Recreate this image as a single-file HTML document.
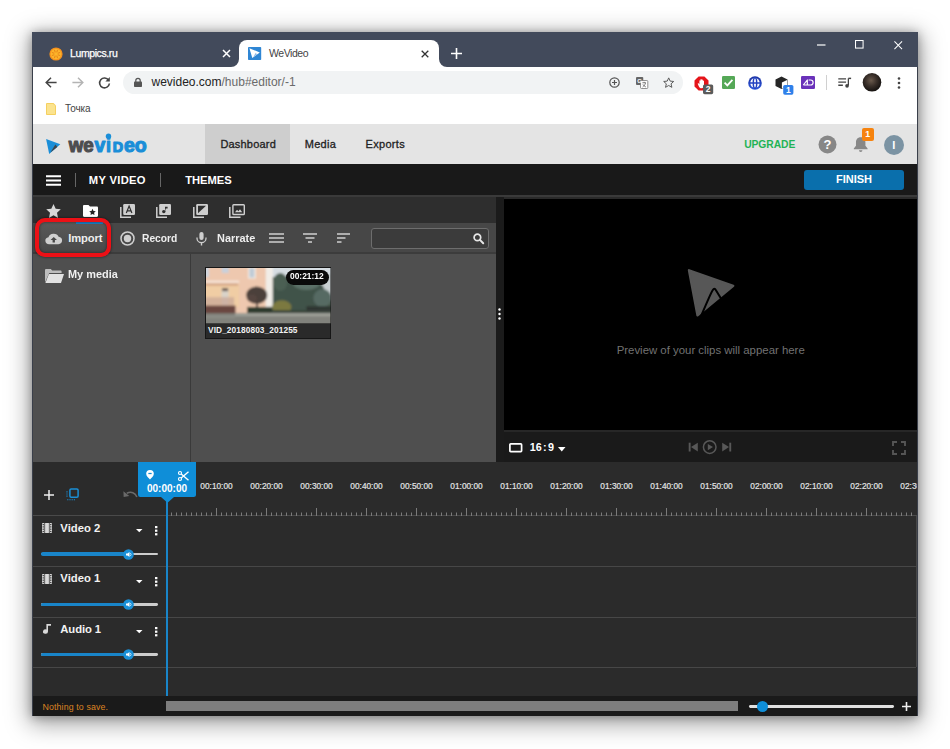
<!DOCTYPE html>
<html lang="en">
<head>
<meta charset="utf-8">
<title>WeVideo</title>
<style>
*{box-sizing:border-box;margin:0;padding:0}
html,body{width:950px;height:749px;overflow:hidden;background:#fff}
body{position:relative;font-family:"Liberation Sans",sans-serif;}
.a,#o>*{position:absolute}
.t{position:absolute;white-space:nowrap;line-height:1}
svg{position:absolute;overflow:visible}
#win{position:absolute;left:32px;top:32px;width:886px;height:684.400px;background:#3a3f4a;box-shadow:0 5px 22px 3px rgba(0,0,0,.37),0 1px 9px rgba(0,0,0,.3)}
#o{position:absolute;left:-32px;top:-32px;width:950px;height:749px}
/* children of #o use page coordinates */
#titlebar{left:32px;top:32px;width:886px;height:35px;background:#424a5b}
#tab2{left:238.500px;top:39.500px;width:200px;height:27.500px;background:#fff;border-radius:8px 8px 0 0}
#chrome{left:33px;top:67px;width:883.500px;height:57px;background:#fff}
#omni{left:123px;top:71px;width:560px;height:23px;border-radius:12px;background:#f1f3f4}
#hdr{left:33px;top:124px;width:883.500px;height:40px;background:#e4e4e4}
#dash{left:205px;top:124px;width:85px;height:40px;background:#cecece}
#blackbar{left:33px;top:164px;width:883.500px;height:30.500px;background:#191919}
#finish{left:804px;top:170.400px;width:100px;height:20px;background:#0a6fac;border-radius:3px}
#editor{left:33px;top:194.500px;width:883.500px;height:267.500px;background:#1b1b1b;border-top:2px solid #3a3a3a}
#iconrow{left:33px;top:196.500px;width:463px;height:26.500px;background:#2e2e2e}
#toolrow{left:33px;top:223px;width:463px;height:31px;background:#474747}
#tree{left:33px;top:254px;width:157px;height:208px;background:#4f4f4f}
#grid{left:191px;top:254px;width:305px;height:208px;background:#4f4f4f}
#preview{left:504px;top:198.500px;width:412.500px;height:231.500px;background:#000}
#pctl{left:504px;top:430px;width:412.500px;height:32px;background:#1a1a1a}
#timeline{left:33px;top:462px;width:883.500px;height:234px;background:#2b2b2b}
#status{left:33px;top:696px;width:883.500px;height:20.400px;background:#1a1a1a}
</style>
</head>
<body>
<div id="win"><div id="o">
  <div id="titlebar"></div>
  <div id="tab2"></div>
  <div id="chrome"></div>
  <div id="omni"></div>
  <!--CHROME-->
  <!-- tab 1 -->
  <svg style="left:49px;top:46.700px" width="14" height="14" viewBox="0 0 14 14"><circle cx="7" cy="7" r="6.600" fill="#f6911d"/><circle cx="7" cy="7" r="5.300" fill="#fcb42a"/><path d="M9.03 7.84L10.70 8.53M7.84 9.03L8.53 10.70M6.16 9.03L5.47 10.70M4.97 7.84L3.30 8.53M4.97 6.16L3.30 5.47M6.16 4.97L5.47 3.30M7.84 4.97L8.53 3.30M9.03 6.16L10.70 5.47" stroke="#e98a1c" stroke-width="1.100" stroke-linecap="round" fill="none"/></svg>
  <div class="t" id="tt1" style="-webkit-text-stroke:.25px #fff;left:70px;top:47.800px;font-size:10.500px;letter-spacing:-.4px;color:#fff">Lumpics.ru</div>
  <svg style="left:222px;top:49px" width="9" height="9" viewBox="0 0 9 9"><path d="M1 1l7 7M8 1l-7 7" stroke="#fff" stroke-width="1.5" fill="none"/></svg>
  <!-- tab 2 -->
  <svg style="left:230.500px;top:59px" width="8" height="8" viewBox="0 0 8 8"><path d="M8 0v8H0A8 8 0 0 0 8 0z" fill="#fff"/></svg>
  <svg style="left:438.500px;top:59px" width="8" height="8" viewBox="0 0 8 8"><path d="M0 0v8h8A8 8 0 0 1 0 0z" fill="#fff"/></svg>
  <svg style="left:248.400px;top:47.100px" width="13.200" height="13" viewBox="0 0 13.200 13"><rect width="13.200" height="13" rx=".8" fill="#2f86d4"/><path d="M1.400 1.200l10.400 4.300-7.500 5.500z" fill="#fff"/><path d="M5.300 10.100l2.500-4.400 1.200 1.700z" fill="#8fb9e6"/></svg>
  <div class="t" id="tt2" style="left:269px;top:47.800px;font-size:10.500px;letter-spacing:-.45px;color:#444">WeVideo</div>
  <svg style="left:421px;top:50px" width="8" height="8" viewBox="0 0 8 8"><path d="M.7.7l6.6 6.6M7.3.7L.7 7.3" stroke="#333" stroke-width="1.3" fill="none"/></svg>
  <svg style="left:451px;top:48px" width="11" height="11" viewBox="0 0 11 11"><path d="M5.5 0v11M0 5.5h11" stroke="#fff" stroke-width="1.6" fill="none"/></svg>
  <!-- window controls -->
  <svg style="left:817.400px;top:44px" width="8.500" height="2" viewBox="0 0 10 2" preserveAspectRatio="none"><path d="M0 1h10" stroke="#fff" stroke-width="1.2"/></svg>
  <svg style="left:855.200px;top:40.400px" width="8.600" height="8.600" viewBox="0 0 10 10"><rect x=".6" y=".6" width="8.8" height="8.8" fill="none" stroke="#fff" stroke-width="1.2"/></svg>
  <svg style="left:893.600px;top:40.600px" width="8.500" height="8.500" viewBox="0 0 10 10"><path d="M.5.5l9 9M9.500.5l-9 9" stroke="#fff" stroke-width="1.2" fill="none"/></svg>
  <!-- nav buttons -->
  <svg style="left:45px;top:77px" width="12" height="11" viewBox="0 0 12 11"><path d="M11.6 5.5H1.4M6 .8L1.2 5.500 6 10.200" stroke="#444" stroke-width="1.5" fill="none"/></svg>
  <svg style="left:72px;top:77px" width="12" height="11" viewBox="0 0 12 11"><path d="M.4 5.500h10.200M6 .8l4.800 4.700L6 10.200" stroke="#b4b4b4" stroke-width="1.5" fill="none"/></svg>
  <svg style="left:98px;top:76px" width="13" height="13" viewBox="0 0 13 13"><path d="M10.600 4.200A4.900 4.900 0 1 0 11.400 7.500" stroke="#444" stroke-width="1.600" fill="none"/><path d="M11.800 1v4.400H7.400z" fill="#444"/></svg>
  <!-- omnibox -->
  <svg style="left:134px;top:78px" width="8" height="9" viewBox="0 0 8 9"><rect x="0" y="3.500" width="8" height="5.500" rx=".8" fill="#555"/><path d="M1.800 4V2.500a2.200 2.200 0 0 1 4.400 0V4" stroke="#555" stroke-width="1.200" fill="none"/></svg>
  <div class="t" id="url" style="left:151.500px;top:75.700px;font-size:12px;color:#222">wevideo.com<span style="color:#6a6a6a">/hub#editor/-1</span></div>
  <svg style="left:609px;top:77px" width="11" height="11" viewBox="0 0 11 11"><circle cx="5.500" cy="5.500" r="4.700" fill="none" stroke="#555" stroke-width="1.200"/><path d="M5.500 3v5M3 5.500h5" stroke="#555" stroke-width="1.200"/></svg>
  <svg style="left:635.600px;top:76.500px" width="11.800" height="11.500" viewBox="0 0 13 13" preserveAspectRatio="none"><rect x="0" y="0" width="8" height="9" rx="1" fill="#666"/><rect x="5" y="4" width="8" height="9" rx="1" fill="#fff" stroke="#777" stroke-width=".9"/><text x="1.500" y="7" font-size="6.500" font-weight="bold" fill="#fff" font-family="Liberation Sans,sans-serif">G</text><path d="M7 6.500h4M9 5.500v1M7.300 11.300c1.800-1.200 2.800-2.800 3.200-4.600M7.600 8.300c.8 1.400 1.800 2.400 3.300 3" stroke="#555" stroke-width=".8" fill="none"/></svg>
  <svg style="left:662.600px;top:76.800px" width="11.400" height="11.400" viewBox="0 0 13 13"><path d="M6.500 1l1.700 3.700 4 .4-3 2.700.9 4-3.600-2.100-3.600 2.100.9-4-3-2.700 4-.4z" fill="none" stroke="#555" stroke-width="1.100" stroke-linejoin="round"/></svg>
  <!-- extensions -->
  <svg style="left:694px;top:75.500px" width="20" height="19" viewBox="0 0 20 19"><path d="M4.600.5h5.800l4.100 4.100v5.800l-4.100 4.100H4.600L.5 10.400V4.600z" fill="#e5141a"/><path d="M5.400 8.500V4.800c0-.9 1.100-.9 1.100 0V3.600c0-.9 1.200-.9 1.200 0v.6c0-.9 1.200-.9 1.200 0v1c0-.8 1.100-.8 1.100 0v4.300c0 1.800-.9 2.700-2.500 2.700-1.400 0-2-.6-2.600-1.800L3.800 8c-.3-.8.600-1.200 1-.5z" fill="#fff"/><rect x="9" y="8.500" width="10.200" height="9.700" rx="1.600" fill="#5b5b5b"/><text x="14.100" y="16.400" font-size="8.500" font-weight="bold" fill="#fff" text-anchor="middle" font-family="Liberation Sans,sans-serif">2</text></svg>
  <svg style="left:721.700px;top:76px" width="13" height="13" viewBox="0 0 13 13"><rect width="13" height="13" rx="1.300" fill="#55a857"/><path d="M2.600 6.700l2.700 2.700 5.100-5.600" stroke="#fff" stroke-width="1.800" fill="none"/></svg>
  <svg style="left:748px;top:75.500px" width="14" height="14" viewBox="0 0 14 14"><defs><linearGradient id="gl" x1="0" y1="0" x2="0" y2="1"><stop offset="0" stop-color="#1a2f9e"/><stop offset="1" stop-color="#2f5be0"/></linearGradient></defs><circle cx="7" cy="7" r="6.800" fill="url(#gl)"/><ellipse cx="7" cy="7" rx="4.700" ry="5" fill="#fff"/><ellipse cx="7" cy="7" rx="1.700" ry="5.200" fill="none" stroke="#2342c0" stroke-width="1.500"/><path d="M1.500 7h11" stroke="#2342c0" stroke-width="1.500"/></svg>
  <svg style="left:775px;top:75.500px" width="19" height="19" viewBox="0 0 19 19"><path d="M6.500.5l6 2.900v6.700l-6 2.900-6-2.900V3.400z" fill="#262626"/><path d="M6.900 6.600l5.200-2.600v5.900l-5.200 2.500z" fill="#fff"/><rect x="8.200" y="9" width="10.200" height="9.700" rx="1.600" fill="#2f80ea"/><text x="13.300" y="16.900" font-size="8.500" font-weight="bold" fill="#fff" text-anchor="middle" font-family="Liberation Sans,sans-serif">1</text></svg>
  <svg style="left:801.300px;top:76px" width="14" height="13" viewBox="0 0 14 13"><rect width="14" height="13" rx="1.300" fill="#6a32ba"/><path d="M2.300 9l4-5v5H2.300M7.600 4h2a2.500 2.500 0 0 1 0 5H6.800" stroke="#fff" stroke-width="1.200" fill="none" stroke-linejoin="round"/></svg>
  <div style="left:826px;top:75px;width:1px;height:15px;background:#d0d0d0"></div>
  <svg style="left:838.400px;top:77px" width="13.400" height="11" viewBox="0 0 14 12"><path d="M0 2h8.500M0 5.500h8.500M0 9h5" stroke="#444" stroke-width="1.400"/><path d="M11 1.500v7.500" stroke="#444" stroke-width="1.400"/><path d="M11 1.500h3" stroke="#444" stroke-width="1.600"/><circle cx="9.600" cy="9.600" r="2" fill="#444"/></svg>
  <svg style="left:862px;top:72px" width="20" height="20" viewBox="0 0 20 20"><defs><radialGradient id="av" cx=".45" cy=".4" r=".6"><stop offset="0" stop-color="#6a5a4c"/><stop offset=".5" stop-color="#3a302a"/><stop offset="1" stop-color="#14110f"/></radialGradient></defs><circle cx="10" cy="10.300" r="9.300" fill="url(#av)"/></svg>
  <svg style="left:897px;top:77px" width="4" height="12" viewBox="0 0 4 12"><circle cx="2" cy="1.500" r="1.300" fill="#444"/><circle cx="2" cy="6" r="1.300" fill="#444"/><circle cx="2" cy="10.500" r="1.300" fill="#444"/></svg>
  <!-- bookmarks -->
  <svg style="left:46px;top:103px" width="10" height="12" viewBox="0 0 10 12"><path d="M0 .8C0 .4.400 0 .8 0h6.700L10 2.500v8.700c0 .4-.4.800-.8.800H.8c-.4 0-.8-.4-.8-.8z" fill="#f5d060"/><path d="M1 1h6.200l1.800 1.800v8.200H1z" fill="#fbe38e"/></svg>
  <div class="t" id="bm" style="left:65px;top:104.300px;font-size:10px;letter-spacing:-.1px;color:#444">Точка</div>
  <!--/CHROME-->
  <div id="hdr"></div>
  <div id="dash"></div>
  <!--HDR-->
  <svg style="left:44px;top:130px" width="106" height="28" viewBox="44 130 106 28" font-family="Liberation Sans,sans-serif" font-weight="bold">
    <path d="M46.100 139l14.200 5.200L49.200 154z" fill="#1a8ed8"/>
    <path d="M50.400 152.400l5-8 1.900 2.600z" fill="#3e4449"/>
    <text y="152" font-size="20.500" stroke-width="1.200" stroke-linejoin="round"><tspan x="68.800" fill="#4d4d4f" stroke="#4d4d4f" textLength="25" lengthAdjust="spacingAndGlyphs">we</tspan><tspan x="94.600" fill="#1a8ed8" stroke="#1a8ed8" textLength="10.800" lengthAdjust="spacingAndGlyphs">v</tspan><tspan x="106" fill="#1a8ed8" stroke="#1a8ed8" textLength="5" lengthAdjust="spacingAndGlyphs">i</tspan><tspan x="112.800" font-size="15.200" fill="#1a8ed8" stroke="#1a8ed8" textLength="10.400" lengthAdjust="spacingAndGlyphs">D</tspan><tspan x="124" fill="#1a8ed8" stroke="#1a8ed8" textLength="22.800" lengthAdjust="spacingAndGlyphs">eo</tspan></text>
    <circle cx="108.500" cy="136.200" r="2.700" fill="#1a8ed8"/>
  </svg>
  <div class="t" id="n1" style="left:220.400px;top:139.100px;font-size:11px;letter-spacing:.2px;color:#222;-webkit-text-stroke:.3px #222">Dashboard</div>
  <div class="t" id="n2" style="left:304.700px;top:139.100px;font-size:11px;letter-spacing:.3px;color:#222;-webkit-text-stroke:.3px #222">Media</div>
  <div class="t" id="n3" style="left:365.600px;top:139.100px;font-size:11px;letter-spacing:.3px;color:#222;-webkit-text-stroke:.3px #222">Exports</div>
  <div class="t" id="upg" style="left:744.200px;top:139.900px;font-size:10.300px;font-weight:bold;letter-spacing:-.07px;color:#1fb355">UPGRADE</div>
  <svg style="left:818px;top:134.500px" width="19" height="19" viewBox="0 0 19 19"><circle cx="9.500" cy="9.500" r="9" fill="#878787"/><text x="9.500" y="14" font-size="13" font-weight="bold" fill="#fff" text-anchor="middle" font-family="Liberation Sans,sans-serif">?</text></svg>
  <svg style="left:853.200px;top:136.300px" width="15.400" height="16" viewBox="0 0 15 16" preserveAspectRatio="none"><path d="M7.500 1.200c-3 0-4.600 2.200-4.600 5v3.600L.8 12.400v.8h13.400v-.8l-2.100-2.600V6.200c0-2.800-1.600-5-4.600-5z" fill="#878787"/><path d="M5.800 14.200a1.700 1.700 0 0 0 3.400 0z" fill="#878787"/></svg>
  <div style="left:861.500px;top:128.400px;width:12.400px;height:12.400px;border-radius:2px;background:#f6830f"></div>
  <div class="t" id="bdg" style="left:861.500px;top:130.400px;width:12.400px;text-align:center;font-size:8.800px;font-weight:bold;color:#fff">1</div>
  <div style="left:883.700px;top:134.800px;width:20px;height:20px;border-radius:50%;background:#7b93a3"></div>
  <div class="t" id="avi" style="left:883.700px;top:139.500px;width:20px;text-align:center;font-size:11px;color:#fff;font-weight:bold">I</div>
  <!--/HDR-->
  <div id="blackbar"></div>
  <div id="finish"></div>
  <!--BAR-->
  <svg style="left:46px;top:175px" width="15" height="11" viewBox="0 0 15 11"><path d="M0 1.200h15M0 5.500h15M0 9.800h15" stroke="#fff" stroke-width="2"/></svg>
  <div style="left:74.500px;top:173px;width:1px;height:14px;background:#666"></div>
  <div class="t" id="b1" style="left:88.800px;top:174.500px;font-size:11.200px;font-weight:bold;letter-spacing:.32px;color:#fff">MY VIDEO</div>
  <div style="left:160px;top:173px;width:1px;height:14px;background:#666"></div>
  <div class="t" id="b2" style="left:185.300px;top:174.500px;font-size:11.200px;font-weight:bold;letter-spacing:-.06px;color:#fff">THEMES</div>
  <div class="t" id="fin" style="left:804px;top:173.500px;width:100px;text-align:center;font-size:11px;font-weight:bold;color:#fff">FINISH</div>
  <!--/BAR-->
  <div id="editor"></div>
  <div id="iconrow"></div>
  <div id="toolrow"></div>
  <div id="tree"></div>
  <div id="grid"></div>
  <!--MEDIA-->
  <div style="left:33px;top:252px;width:463px;height:2px;background:#3c3c3c"></div>
  <div style="left:190px;top:254px;width:1px;height:208px;background:#3a3a3a"></div>
  <!-- icon row -->
  <svg style="left:46px;top:204px" width="15" height="14" viewBox="0 0 15 14"><path d="M7.500 0l2.200 4.700 5.100.6-3.800 3.500 1 5.100-4.500-2.600L3 13.900l1-5.100L.2 5.300l5.100-.6z" fill="#d8d8d8"/></svg>
  <svg style="left:83px;top:205px" width="15" height="12" viewBox="0 0 15 12"><path d="M0 1.200C0 .5.500 0 1.200 0h4.300l1.500 1.600h6.800c.7 0 1.200.5 1.200 1.200v8c0 .7-.5 1.200-1.200 1.200H1.200C.5 12 0 11.500 0 10.800z" fill="#fff"/><path d="M9.500 3.800l1 2.100 2.300.3-1.700 1.600.4 2.300-2-1.100-2 1.100.4-2.300-1.700-1.600 2.300-.3z" fill="#222"/></svg>
  <svg style="left:120px;top:204px" width="15" height="14" viewBox="0 0 15 14"><path d="M.8 3v10.200H11" fill="none" stroke="#cfcfcf" stroke-width="1.500"/><rect x="3.200" y="0" width="11.800" height="11" rx="1.200" fill="#cfcfcf"/><path d="M6.300 9l2.800-7 2.800 7M7.300 6.800h3.600" stroke="#2e2e2e" stroke-width="1.200" fill="none"/></svg>
  <svg style="left:156px;top:204px" width="15" height="14" viewBox="0 0 15 14"><path d="M.8 3v10.200H11" fill="none" stroke="#cfcfcf" stroke-width="1.500"/><rect x="3.200" y="0" width="11.800" height="11" rx="1.200" fill="#cfcfcf"/><circle cx="7.800" cy="7.600" r="1.700" fill="#2e2e2e"/><path d="M9 7.600V2.800h2.600v1.600H9.800" fill="#2e2e2e"/></svg>
  <svg style="left:193px;top:204px" width="15" height="14" viewBox="0 0 15 14"><path d="M.8 3v10.200H11" fill="none" stroke="#cfcfcf" stroke-width="1.500"/><rect x="3.200" y="0" width="11.800" height="11" rx="1.200" fill="#cfcfcf"/><path d="M5 9.200V1.800h8z" fill="#2e2e2e"/></svg>
  <svg style="left:229px;top:204px" width="16" height="14" viewBox="0 0 16 14"><path d="M.8 3v10.200H11.500" fill="none" stroke="#cfcfcf" stroke-width="1.500"/><rect x="3.900" y=".7" width="11.400" height="9.800" rx=".8" fill="none" stroke="#cfcfcf" stroke-width="1.400"/><path d="M6 8.300l2-2.600 1.400 1.500 1.600-2 2.200 3.100z" fill="#cfcfcf"/></svg>
  <!-- Import highlight -->
  <div style="left:38px;top:221px;width:70px;height:33px;border-radius:6px;background:linear-gradient(#5a5a5a,#484848)"></div>
  <div style="left:76px;top:221.500px;width:27px;height:2px;background:#1b7fc4"></div>
  <div style="left:35px;top:217.800px;width:76px;height:39.500px;border:4px solid #ec1016;border-radius:10px;box-shadow:0 0 3px rgba(0,0,0,.6),inset 0 0 3px rgba(0,0,0,.5)"></div>
  <svg style="left:45px;top:232.700px" width="17.500" height="11.200" viewBox="0 0 18 13" preserveAspectRatio="none"><path d="M4.200 13A4.100 4.100 0 0 1 3.600 4.900 5.400 5.400 0 0 1 14 4.500 4.300 4.300 0 0 1 13.800 13z" fill="#cfcfcf"/><path d="M9 4.600l3.300 3.600h-2.100v2.800H7.800V8.200H5.700z" fill="#474747"/></svg>
  <div class="t" id="m1" style="left:68.200px;top:232.500px;font-size:11.200px;font-weight:bold;letter-spacing:-.08px;color:#eee">Import</div>
  <svg style="left:120px;top:231px" width="15" height="15" viewBox="0 0 15 15"><circle cx="7.500" cy="7.500" r="6.500" fill="none" stroke="#cfcfcf" stroke-width="1.500"/><circle cx="7.500" cy="7.500" r="3.700" fill="#cfcfcf"/></svg>
  <div class="t" id="m2" style="left:141.500px;top:232.500px;font-size:11.200px;font-weight:bold;color:#eee;transform:scaleX(.917);transform-origin:0 0">Record</div>
  <svg style="left:196px;top:232px" width="11" height="14" viewBox="0 0 11 14"><rect x="3.400" y="0" width="4.200" height="8" rx="2.100" fill="#cfcfcf"/><path d="M1 5.500v.7a4.500 4.500 0 0 0 9 0v-.7" stroke="#cfcfcf" stroke-width="1.300" fill="none"/><path d="M5.500 10.500V13.500" stroke="#cfcfcf" stroke-width="1.400"/></svg>
  <div class="t" id="m3" style="left:216.800px;top:232.500px;font-size:11.200px;font-weight:bold;color:#eee;transform:scaleX(.975);transform-origin:0 0">Narrate</div>
  <svg style="left:269px;top:233px" width="15" height="10" viewBox="0 0 15 10"><path d="M0 1h15M0 5h15M0 9h15" stroke="#cfcfcf" stroke-width="1.500"/></svg>
  <svg style="left:303px;top:233px" width="14" height="10" viewBox="0 0 14 10"><path d="M0 1h14M2.500 5h9M5 9h4" stroke="#cfcfcf" stroke-width="1.700"/></svg>
  <svg style="left:337px;top:233px" width="14" height="10" viewBox="0 0 14 10"><path d="M0 1h13M0 5h8.500M0 9h4.500" stroke="#cfcfcf" stroke-width="1.700"/></svg>
  <div style="left:370.500px;top:227.500px;width:118px;height:21.500px;border:1px solid #6d6d6d;border-radius:3px;background:#3b3b3b"></div>
  <svg style="left:473px;top:233px" width="11" height="11" viewBox="0 0 11 11"><circle cx="4.400" cy="4.400" r="3.300" fill="none" stroke="#e6e6e6" stroke-width="1.700"/><path d="M6.900 6.900l3.300 3.300" stroke="#e6e6e6" stroke-width="2" stroke-linecap="round"/></svg>
  <!-- tree -->
  <svg style="left:45px;top:269px" width="19" height="14" viewBox="0 0 19 14"><path d="M0 13.500V1.200C0 .5.500 0 1.200 0h4.600l1.400 1.500h8.300c.6 0 1.100.5 1.100 1.100V4H4.200z" fill="#bdbdbd"/><path d="M3.900 5H19l-3 9H.4z" fill="#e2e2e2"/></svg>
  <div class="t" id="mm" style="left:68.400px;top:268.700px;font-size:11px;font-weight:bold;color:#f0f0f0;transform:scaleX(.992);transform-origin:0 0">My media</div>
  <!-- thumbnail -->
  <div style="left:204.500px;top:267px;width:126.500px;height:72px;background:#2a2a2a;border:1px solid #161616"></div>
  <svg style="left:205.500px;top:268px" width="124.500" height="55.300" viewBox="0 0 124 55" preserveAspectRatio="none">
    <defs><filter id="bl" x="-5%" y="-5%" width="110%" height="110%"><feGaussianBlur stdDeviation="1.300"/></filter><clipPath id="cp"><rect width="124" height="55"/></clipPath></defs>
    <g clip-path="url(#cp)"><g filter="url(#bl)">
      <rect x="-5" y="-5" width="135" height="65" fill="#46564b"/>
      <rect x="64" y="-5" width="66" height="14" fill="#d6dde2"/>
      <rect x="112" y="6" width="18" height="26" fill="#c9d0d2"/>
      <ellipse cx="92" cy="27" rx="27" ry="21" fill="#41524a"/>
      <ellipse cx="100" cy="14" rx="14" ry="8" fill="#5c7167"/>
      <ellipse cx="116" cy="30" rx="9" ry="9" fill="#566a63"/>
      <ellipse cx="74" cy="14" rx="7" ry="9" fill="#4b5f53"/>
      <rect x="100" y="38" width="30" height="8" fill="#2f3631"/>
      <rect x="-5" y="-5" width="66" height="50" fill="#eec8af"/>
      <rect x="-5" y="15" width="38" height="24" fill="#f0cda4"/>
      <rect x="-5" y="12.500" width="38" height="2.800" fill="#f5e2d4"/>
      <rect x="-5" y="15.300" width="37" height="2.200" fill="#d3a385"/>
      <rect x="15.700" y="-2" width="7" height="7" fill="#c9d0da"/>
      <rect x="42" y="-1" width="7.500" height="11.500" fill="#f3efe9"/><rect x="43.200" y="0" width="5" height="9.500" fill="#bfcbd6"/>
      <rect x="-2" y="-2" width="5" height="11" fill="#d0d6de"/>
      <rect x="15.500" y="20" width="7" height="17" fill="#d9d3c9"/><rect x="16" y="20" width="6" height="3" fill="#6c5c52"/>
      <rect x="-5" y="29" width="33" height="8.500" fill="#c9a898" opacity=".75"/>
      <rect x="59.500" y="-2" width="7" height="41.500" fill="#f1ede7"/>
      <rect x="-5" y="37.400" width="34.400" height="10.400" fill="#6a463f"/>
      <ellipse cx="50.500" cy="27" rx="10.500" ry="8.500" fill="#4b3f3a"/><ellipse cx="46" cy="30" rx="5" ry="4" fill="#55453f"/><rect x="50" y="33" width="1.800" height="9" fill="#4b3f3a"/>
      <rect x="41" y="38.700" width="25" height="6.500" fill="#2f3a2d"/>
      <ellipse cx="75.500" cy="39" rx="9.500" ry="7" fill="#7b793f"/>
      <rect x="66" y="42" width="64" height="4" fill="#39453a"/>
      <rect x="-5" y="45" width="135" height="15" fill="#81827b"/>
      <rect x="29" y="45" width="101" height="3" fill="#9fa098"/>
      <rect x="-5" y="47.500" width="34" height="2" fill="#8f9089"/>
    </g></g>
  </svg>
  <div style="left:286px;top:269.800px;width:42.500px;height:14.800px;border-radius:7.400px;background:#0a0a0a"></div>
  <div class="t" id="dur" style="left:290.300px;top:272.100px;font-size:9.200px;font-weight:bold;color:#fff;transform:scaleX(.915);transform-origin:0 0">00:21:12</div>
  <div class="t" id="cap" style="left:208px;top:325.800px;font-size:8.300px;font-weight:bold;letter-spacing:.1px;color:#f2f2f2">VID_20180803_201255</div>
  <!-- splitter dots -->
  <svg style="left:498px;top:308px" width="3" height="12" viewBox="0 0 3 12"><circle cx="1.500" cy="1.500" r="1.200" fill="#fff"/><circle cx="1.500" cy="6" r="1.200" fill="#fff"/><circle cx="1.500" cy="10.500" r="1.200" fill="#fff"/></svg>
  <!--/MEDIA-->
  <div id="preview"></div>
  <div id="pctl"></div>
  <!--PREVIEW-->
  <div style="left:504px;top:196.500px;width:413px;height:2px;background:#2a2a2a"></div>
  <div style="left:504px;top:430px;width:413px;height:1.500px;background:#272727"></div>
  <svg style="left:686px;top:268px" width="50" height="50" viewBox="686 268 50 50"><path d="M689 270.300L733.200 285.800 697.500 315.200z" fill="#575757" stroke="#575757" stroke-width="2.400" stroke-linejoin="round"/><path d="M701.300 315.500C706 305 710 294.500 712.800 290 713.800 288.200 715 288.200 715.800 290L721.600 299.500" fill="none" stroke="#000" stroke-width="2"/></svg>
  <div class="t" id="pv" style="left:616.700px;top:344.500px;font-size:11.400px;color:#727272">Preview of your clips will appear here</div>
  <svg style="left:509px;top:443px" width="13.500" height="9.500" viewBox="0 0 13.500 9.500"><rect x=".9" y=".9" width="11.700" height="7.700" rx=".8" fill="none" stroke="#fff" stroke-width="1.700"/></svg>
  <div class="t" id="ar" style="left:529.700px;top:441.700px;font-size:10.800px;font-weight:bold;color:#fff;letter-spacing:0">16<span style="margin:0 1.400px">:</span>9</div>
  <svg style="left:558px;top:446.500px" width="7.500" height="4.500" viewBox="0 0 7.500 4.500"><path d="M0 0h7.500L3.750 4.500z" fill="#fff"/></svg>
  <svg style="left:688px;top:440.300px" width="44" height="14" viewBox="0 0 44 14"><g fill="#585858"><rect x=".7" y="2.700" width="1.900" height="8.800"/><path d="M9.800 2.700v8.800L3 7.100z"/><rect x="41.300" y="2.700" width="1.900" height="8.800"/><path d="M34.200 2.700v8.800l6.800-4.400z"/><path d="M19.800 4l5.200 3.100-5.200 3.100z"/></g><circle cx="21.700" cy="7.100" r="6.300" fill="none" stroke="#585858" stroke-width="1.500"/></svg>
  <svg style="left:892px;top:440.500px" width="14" height="14" viewBox="0 0 14 14"><path d="M1 5V1h4M9 1h4v4M13 9v4H9M5 13H1V9" fill="none" stroke="#555" stroke-width="1.900"/></svg>
  <!--/PREVIEW-->
  <div id="timeline"></div>
  <!--TIMELINE-->
  <div style="left:33px;top:515px;width:884px;height:1px;background:#4a4a4a"></div>
  <div style="left:33px;top:566px;width:883px;height:1px;background:#474747"></div>
  <div style="left:33px;top:616.5px;width:883px;height:1px;background:#474747"></div>
  <div style="left:33px;top:666.5px;width:883px;height:1px;background:#474747"></div>
  <div style="left:915.500px;top:516px;width:1px;height:151px;background:#474747"></div>
  <svg style="left:0;top:0" width="950" height="749" viewBox="0 0 950 749"><path d="M171.5 512.500v3.500M176.5 512.500v3.500M181.5 512.500v3.500M186.5 512.500v3.500M191.5 512.500v3.500M196.5 512.500v3.500M201.5 512.500v3.500M206.5 512.500v3.500M211.5 512.500v3.500M216.5 508v8M221.5 512.500v3.500M226.5 512.500v3.500M231.5 512.500v3.500M236.5 512.500v3.500M241.5 512.500v3.500M246.5 512.500v3.500M251.5 512.500v3.500M256.5 512.500v3.500M261.5 512.500v3.500M266.5 508v8M271.5 512.500v3.500M276.5 512.500v3.500M281.5 512.500v3.500M286.5 512.500v3.500M291.5 512.500v3.500M296.5 512.500v3.500M301.5 512.500v3.500M306.5 512.500v3.500M311.5 512.500v3.500M316.5 508v8M321.5 512.500v3.500M326.5 512.500v3.500M331.5 512.500v3.500M336.5 512.500v3.500M341.5 512.500v3.500M346.5 512.500v3.500M351.5 512.500v3.500M356.5 512.500v3.500M361.5 512.500v3.500M366.5 508v8M371.5 512.500v3.500M376.5 512.500v3.500M381.5 512.500v3.500M386.5 512.500v3.500M391.5 512.500v3.500M396.5 512.500v3.500M401.5 512.500v3.500M406.5 512.500v3.500M411.5 512.500v3.500M416.5 508v8M421.5 512.500v3.500M426.5 512.500v3.500M431.5 512.500v3.500M436.5 512.500v3.500M441.5 512.500v3.500M446.5 512.500v3.500M451.5 512.500v3.500M456.5 512.500v3.500M461.5 512.500v3.500M466.5 508v8M471.5 512.500v3.500M476.5 512.500v3.500M481.5 512.500v3.500M486.5 512.500v3.500M491.5 512.500v3.500M496.5 512.500v3.500M501.5 512.500v3.500M506.5 512.500v3.500M511.5 512.500v3.500M516.5 508v8M521.5 512.500v3.500M526.5 512.500v3.500M531.5 512.500v3.500M536.5 512.500v3.500M541.5 512.500v3.500M546.5 512.500v3.500M551.5 512.500v3.500M556.5 512.500v3.500M561.5 512.500v3.500M566.5 508v8M571.5 512.500v3.500M576.5 512.500v3.500M581.5 512.500v3.500M586.5 512.500v3.500M591.5 512.500v3.500M596.5 512.500v3.500M601.5 512.500v3.500M606.5 512.500v3.500M611.5 512.500v3.500M616.5 508v8M621.5 512.500v3.500M626.5 512.500v3.500M631.5 512.500v3.500M636.5 512.500v3.500M641.5 512.500v3.500M646.5 512.500v3.500M651.5 512.500v3.500M656.5 512.500v3.500M661.5 512.500v3.500M666.5 508v8M671.5 512.500v3.500M676.5 512.500v3.500M681.5 512.500v3.500M686.5 512.500v3.500M691.5 512.500v3.500M696.5 512.500v3.500M701.5 512.500v3.500M706.5 512.500v3.500M711.5 512.500v3.500M716.5 508v8M721.5 512.500v3.500M726.5 512.500v3.500M731.5 512.500v3.500M736.5 512.500v3.500M741.5 512.500v3.500M746.5 512.500v3.500M751.5 512.500v3.500M756.5 512.500v3.500M761.5 512.500v3.500M766.5 508v8M771.5 512.500v3.500M776.5 512.500v3.500M781.5 512.500v3.500M786.5 512.500v3.500M791.5 512.500v3.500M796.5 512.500v3.500M801.5 512.500v3.500M806.5 512.500v3.500M811.5 512.500v3.500M816.5 508v8M821.5 512.500v3.500M826.5 512.500v3.500M831.5 512.500v3.500M836.5 512.500v3.500M841.5 512.500v3.500M846.5 512.500v3.500M851.5 512.500v3.500M856.5 512.500v3.500M861.5 512.500v3.500M866.5 508v8M871.5 512.500v3.500M876.5 512.500v3.500M881.5 512.500v3.500M886.5 512.500v3.500M891.5 512.500v3.500M896.5 512.500v3.500M901.5 512.500v3.500M906.5 512.500v3.500M911.5 512.500v3.500" stroke="#7a7a7a" stroke-width="1" fill="none"/></svg>
  <div style="left:196px;top:478px;width:721px;height:16px;overflow:hidden">
    <div class="t rl" style="-webkit-text-stroke:.2px #e2e2e2;top:4px;left:0.5px;width:40px;text-align:center;font-size:8.300px;color:#e2e2e2">00:10:00</div>
    <div class="t rl" style="-webkit-text-stroke:.2px #e2e2e2;top:4px;left:50.5px;width:40px;text-align:center;font-size:8.300px;color:#e2e2e2">00:20:00</div>
    <div class="t rl" style="-webkit-text-stroke:.2px #e2e2e2;top:4px;left:100.5px;width:40px;text-align:center;font-size:8.300px;color:#e2e2e2">00:30:00</div>
    <div class="t rl" style="-webkit-text-stroke:.2px #e2e2e2;top:4px;left:150.5px;width:40px;text-align:center;font-size:8.300px;color:#e2e2e2">00:40:00</div>
    <div class="t rl" style="-webkit-text-stroke:.2px #e2e2e2;top:4px;left:200.5px;width:40px;text-align:center;font-size:8.300px;color:#e2e2e2">00:50:00</div>
    <div class="t rl" style="-webkit-text-stroke:.2px #e2e2e2;top:4px;left:250.5px;width:40px;text-align:center;font-size:8.300px;color:#e2e2e2">01:00:00</div>
    <div class="t rl" style="-webkit-text-stroke:.2px #e2e2e2;top:4px;left:300.5px;width:40px;text-align:center;font-size:8.300px;color:#e2e2e2">01:10:00</div>
    <div class="t rl" style="-webkit-text-stroke:.2px #e2e2e2;top:4px;left:350.5px;width:40px;text-align:center;font-size:8.300px;color:#e2e2e2">01:20:00</div>
    <div class="t rl" style="-webkit-text-stroke:.2px #e2e2e2;top:4px;left:400.5px;width:40px;text-align:center;font-size:8.300px;color:#e2e2e2">01:30:00</div>
    <div class="t rl" style="-webkit-text-stroke:.2px #e2e2e2;top:4px;left:450.5px;width:40px;text-align:center;font-size:8.300px;color:#e2e2e2">01:40:00</div>
    <div class="t rl" style="-webkit-text-stroke:.2px #e2e2e2;top:4px;left:500.5px;width:40px;text-align:center;font-size:8.300px;color:#e2e2e2">01:50:00</div>
    <div class="t rl" style="-webkit-text-stroke:.2px #e2e2e2;top:4px;left:550.5px;width:40px;text-align:center;font-size:8.300px;color:#e2e2e2">02:00:00</div>
    <div class="t rl" style="-webkit-text-stroke:.2px #e2e2e2;top:4px;left:600.5px;width:40px;text-align:center;font-size:8.300px;color:#e2e2e2">02:10:00</div>
    <div class="t rl" style="-webkit-text-stroke:.2px #e2e2e2;top:4px;left:650.5px;width:40px;text-align:center;font-size:8.300px;color:#e2e2e2">02:20:00</div>
    <div class="t rl" style="-webkit-text-stroke:.2px #e2e2e2;top:4px;left:700.5px;width:40px;text-align:center;font-size:8.300px;color:#e2e2e2">02:30:00</div>
  </div>
  <svg style="left:43.500px;top:489.500px" width="10" height="10" viewBox="0 0 10 10"><path d="M5 0v10M0 5h10" stroke="#eee" stroke-width="1.500"/></svg>
  <svg style="left:66px;top:488px" width="14" height="13" viewBox="0 0 14 13"><rect x="3.900" y="1.100" width="8.200" height="8.200" rx="1.200" fill="none" stroke="#1a8fd6" stroke-width="1.500"/><path d="M1 3.200v6.500M1.200 11.700h8.500" fill="none" stroke="#1a8fd6" stroke-width="1.100" stroke-dasharray="1.200 1"/></svg>
  <svg style="left:123px;top:490px" width="15" height="8" viewBox="123 490 15 8"><path d="M136.900 497C135.300 492.800 131.200 491.200 126.800 493.200" fill="none" stroke="#6a6a6a" stroke-width="1.500"/><path d="M123.400 491.200l.3 5.800 5.600-.9z" fill="#6a6a6a"/></svg>
  <div style="left:165.700px;top:497px;width:2.600px;height:199px;background:#1985c9"></div>
  <div style="left:138px;top:462px;width:58px;height:35px;border-radius:0 0 2.500px 2.500px;background:#0f8ed8"></div>
  <svg style="left:160.500px;top:496.800px" width="13" height="6" viewBox="0 0 13 6"><path d="M0 0h13L6.500 5.800z" fill="#0f8ed8"/></svg>
  <svg style="left:145.700px;top:470.300px" width="8" height="9.600" viewBox="0 0 8 10"><path d="M4 0a4 4 0 0 1 4 4c0 2.600-2.600 4.200-4 6C2.600 8.200 0 6.600 0 4a4 4 0 0 1 4-4z" fill="#fff"/><rect x="2.300" y="3" width="3.400" height="1.300" fill="#0f8ed8"/></svg>
  <svg style="left:177.500px;top:470.500px" width="11" height="10" viewBox="0 0 11 10"><circle cx="2" cy="2" r="1.500" fill="none" stroke="#fff" stroke-width="1.200"/><circle cx="2" cy="8" r="1.500" fill="none" stroke="#fff" stroke-width="1.200"/><path d="M3.200 3L10.500 9.200M3.200 7L10.500.8" stroke="#fff" stroke-width="1.400" fill="none"/></svg>
  <div class="t" id="ph" style="left:138px;top:483.800px;width:58px;text-align:center;font-size:10px;font-weight:bold;color:#fff">00:00:00</div>
  <svg style="left:41.500px;top:523.0px" width="10" height="10" viewBox="0 0 10 10"><rect width="10" height="10" rx=".8" fill="#d9d9d9"/><g fill="#2b2b2b"><rect x="2.400" y="0" width=".7" height="10"/><rect x="6.900" y="0" width=".7" height="10"/><rect x=".6" y="1" width="1.200" height="1.200"/><rect x=".6" y="3.300" width="1.200" height="1.200"/><rect x=".6" y="5.600" width="1.200" height="1.200"/><rect x=".6" y="7.900" width="1.200" height="1.200"/><rect x="8.200" y="1" width="1.200" height="1.200"/><rect x="8.200" y="3.300" width="1.200" height="1.200"/><rect x="8.200" y="5.600" width="1.200" height="1.200"/><rect x="8.200" y="7.900" width="1.200" height="1.200"/></g></svg>
  <div class="t tn" style="left:60.300px;top:523.3px;font-size:11.300px;font-weight:bold;color:#f2f2f2;letter-spacing:0">Video 2</div>
  <svg style="left:135.500px;top:529.3px" width="6.500" height="3.200" viewBox="0 0 6.500 3.200"><path d="M0 0h6.500L3.250 3.200z" fill="#fff"/></svg>
  <svg style="left:155px;top:526.0px" width="2.400" height="9.400" viewBox="0 0 2.400 9.400"><rect width="2.400" height="2.200" fill="#fff"/><rect y="3.600" width="2.400" height="2.200" fill="#fff"/><rect y="7.200" width="2.400" height="2.200" fill="#fff"/></svg>
  <div style="left:41px;top:552.600px;width:117px;height:2.800px;border-radius:1.400px;background:#cdcdcd"></div>
  <div style="left:41px;top:552.200px;width:88px;height:3.600px;border-radius:1.800px;background:#1985c9"></div>
  <svg style="left:123px;top:548.500px" width="11" height="11" viewBox="0 0 11 11"><circle cx="5.500" cy="5.500" r="5.300" fill="#1a8fd6"/><path d="M3 4.500h1.500L6.500 3v5L4.500 6.500H3z" fill="#fff"/><path d="M7.300 4a2 2 0 0 1 0 3" stroke="#fff" stroke-width=".7" fill="none"/></svg>
  <svg style="left:41.500px;top:573.5px" width="10" height="10" viewBox="0 0 10 10"><rect width="10" height="10" rx=".8" fill="#d9d9d9"/><g fill="#2b2b2b"><rect x="2.400" y="0" width=".7" height="10"/><rect x="6.900" y="0" width=".7" height="10"/><rect x=".6" y="1" width="1.200" height="1.200"/><rect x=".6" y="3.300" width="1.200" height="1.200"/><rect x=".6" y="5.600" width="1.200" height="1.200"/><rect x=".6" y="7.900" width="1.200" height="1.200"/><rect x="8.200" y="1" width="1.200" height="1.200"/><rect x="8.200" y="3.300" width="1.200" height="1.200"/><rect x="8.200" y="5.600" width="1.200" height="1.200"/><rect x="8.200" y="7.900" width="1.200" height="1.200"/></g></svg>
  <div class="t tn" style="left:60.300px;top:573.200px;font-size:11.300px;font-weight:bold;color:#f2f2f2;letter-spacing:0">Video 1</div>
  <svg style="left:135.500px;top:579.8px" width="6.500" height="3.200" viewBox="0 0 6.500 3.200"><path d="M0 0h6.500L3.250 3.200z" fill="#fff"/></svg>
  <svg style="left:155px;top:576.5px" width="2.400" height="9.400" viewBox="0 0 2.400 9.400"><rect width="2.400" height="2.200" fill="#fff"/><rect y="3.600" width="2.400" height="2.200" fill="#fff"/><rect y="7.200" width="2.400" height="2.200" fill="#fff"/></svg>
  <div style="left:41px;top:603.200px;width:117px;height:2.800px;border-radius:1.400px;background:#cdcdcd"></div>
  <div style="left:41px;top:602.800px;width:88px;height:3.600px;border-radius:1.800px;background:#1985c9"></div>
  <svg style="left:123px;top:599.100px" width="11" height="11" viewBox="0 0 11 11"><circle cx="5.500" cy="5.500" r="5.300" fill="#1a8fd6"/><path d="M3 4.500h1.500L6.500 3v5L4.500 6.500H3z" fill="#fff"/><path d="M7.300 4a2 2 0 0 1 0 3" stroke="#fff" stroke-width=".7" fill="none"/></svg>
  <svg style="left:42.500px;top:624.0px" width="8" height="10" viewBox="0 0 8 10"><path d="M3.400 0H8v1.800H5v5.700a2.500 2.300 0 1 1-1.600-2.100z" fill="#d9d9d9"/></svg>
  <div class="t tn" style="left:60.300px;top:624.3px;font-size:11.300px;font-weight:bold;color:#f2f2f2;letter-spacing:-.1px">Audio 1</div>
  <svg style="left:135.500px;top:630.3px" width="6.500" height="3.200" viewBox="0 0 6.500 3.200"><path d="M0 0h6.500L3.250 3.200z" fill="#fff"/></svg>
  <svg style="left:155px;top:627.0px" width="2.400" height="9.400" viewBox="0 0 2.400 9.400"><rect width="2.400" height="2.200" fill="#fff"/><rect y="3.600" width="2.400" height="2.200" fill="#fff"/><rect y="7.200" width="2.400" height="2.200" fill="#fff"/></svg>
  <div style="left:41px;top:653px;width:117px;height:2.800px;border-radius:1.400px;background:#cdcdcd"></div>
  <div style="left:41px;top:652.600px;width:88px;height:3.600px;border-radius:1.800px;background:#1985c9"></div>
  <svg style="left:123px;top:648.900px" width="11" height="11" viewBox="0 0 11 11"><circle cx="5.500" cy="5.500" r="5.300" fill="#1a8fd6"/><path d="M3 4.500h1.500L6.500 3v5L4.500 6.500H3z" fill="#fff"/><path d="M7.300 4a2 2 0 0 1 0 3" stroke="#fff" stroke-width=".7" fill="none"/></svg>
  <!--/TIMELINE-->
  <div id="status"></div>
  <!--STATUS-->
  <div class="t" id="nts" style="left:42.400px;top:702.750px;font-size:8.800px;letter-spacing:.14px;color:#dd8423">Nothing to save.</div>
  <div style="left:166px;top:701.300px;width:571.500px;height:9.800px;background:#7e7e7e"></div>
  <div style="left:749px;top:705px;width:145px;height:2.800px;border-radius:1.400px;background:#e0e0e0"></div>
  <div style="left:756.600px;top:700.500px;width:11.600px;height:11.600px;border-radius:50%;background:#0f8ed8"></div>
  <svg style="left:901.500px;top:702px" width="9" height="9" viewBox="0 0 9 9"><path d="M4.500 0v9M0 4.500h9" stroke="#f0f0f0" stroke-width="1.600"/></svg>
  <!--/STATUS-->
</div></div>
</body>
</html>
